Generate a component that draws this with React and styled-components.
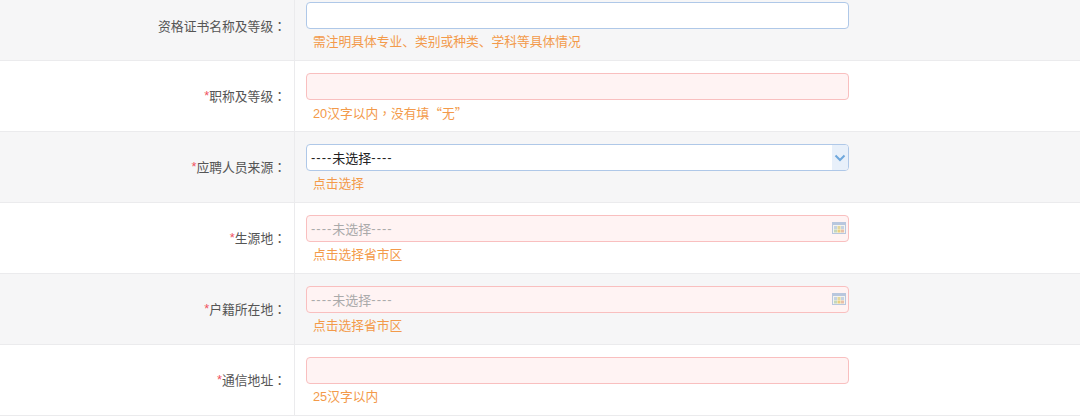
import React from 'react';
import styled, { createGlobalStyle } from 'styled-components';

const GlobalStyle = createGlobalStyle`
  html, body {
    margin: 0;
    padding: 0;
    background: #fff;
    overflow: hidden;
  }
  body {
    font-family: "Liberation Sans", "Noto Sans CJK SC", sans-serif;
  }
`;

const Form = styled.div`
  width: 1080px;
  height: 416px;
  overflow: hidden;
`;

const Row = styled.div`
  display: grid;
  grid-template-columns: 294px 1fr;
  height: ${(p) => (p.$first ? '60px' : '70px')};
  background: ${(p) => (p.$shaded ? '#f6f6f7' : '#fff')};
  border-bottom: 1px solid #ebebed;
`;

const Label = styled.div`
  display: flex;
  align-items: center;
  justify-content: flex-end;
  padding: ${(p) => (p.$first ? '0 8px 10px 0' : '0 8px 2px 0')};
  font-size: 12.8px;
  color: #555;
  white-space: nowrap;
`;

const Star = styled.span`
  color: #f0525f;
`;

// centred full-width punctuation, as the traditional CJK cut draws it
const Punct = styled.span`
  font-family: "Noto Sans CJK TC", sans-serif;
`;

const Control = styled.div`
  display: flex;
  flex-direction: column;
  align-items: flex-start;
  padding: ${(p) => (p.$first ? '2px 0 0 11px' : '12px 0 0 11px')};
  border-left: 1px solid #ebebed;
`;

const Field = styled.div`
  position: relative;
  box-sizing: border-box;
  display: flex;
  align-items: center;
  width: 543px;
  height: 27px;
  padding-left: 4px;
  border-radius: 4px;
  border: 1px solid ${(p) => (p.$error ? '#f9bfbf' : '#afc8e8')};
  background: ${(p) => (p.$error ? '#fff3f3' : '#fff')};
  color: ${(p) => (p.$error ? '#aaa' : '#222')};
  font-size: 13px;
`;

const Dashes = styled.span`
  letter-spacing: 1px;
`;

const SelectArrow = styled.div`
  position: absolute;
  top: 0;
  right: 0;
  bottom: 0;
  width: 16px;
  display: flex;
  align-items: center;
  justify-content: center;
  background: #e8f0fa;
  border-radius: 0 3px 3px 0;
`;

const CalendarIcon = styled.svg`
  position: absolute;
  top: 6px;
  right: 2px;
`;

const Hint = styled.div`
  margin: 5px 0 0 7px;
  font-size: 12.75px;
  line-height: 15px;
  color: #f39a4a;
  white-space: nowrap;
`;

const Chevron = () => (
  <svg width="12" height="8" viewBox="0 0 12 8">
    <path d="M1.5 1.5 L6 6 L10.5 1.5" fill="none" stroke="#6fa8dc" strokeWidth="2" />
  </svg>
);

const Calendar = () => (
  <CalendarIcon width="14" height="12" viewBox="0 0 14 12">
    <rect x="0" y="0" width="14" height="12" fill="#b9c7de" />
    <rect x="1" y="3" width="12" height="8" fill="#f5f4ee" />
    <rect x="2" y="4" width="3" height="3" fill="#c5d2e2" />
    <rect x="5.5" y="4" width="3" height="3" fill="#e4d79c" />
    <rect x="9" y="4" width="3" height="3" fill="#c5d2e2" />
    <rect x="2" y="7.5" width="3" height="3" fill="#c5d8bb" />
    <rect x="5.5" y="7.5" width="3" height="3" fill="#eccf7d" />
    <rect x="9" y="7.5" width="3" height="3" fill="#e8bfa8" />
  </CalendarIcon>
);

const Unselected = () => (
  <>
    <Dashes>----</Dashes>未选择<Dashes>----</Dashes>
  </>
);

const rows = [
  { label: '资格证书名称及等级', hint: '需注明具体专业、类别或种类、学科等具体情况' },
  {
    label: '职称及等级',
    required: true,
    error: true,
    hint: (
      <>
        20汉字以内<Punct>，</Punct>没有填<Punct>“</Punct>无<Punct>”</Punct>
      </>
    ),
  },
  { label: '应聘人员来源', required: true, kind: 'select', hint: '点击选择' },
  { label: '生源地', required: true, error: true, kind: 'date', hint: '点击选择省市区' },
  { label: '户籍所在地', required: true, error: true, kind: 'date', hint: '点击选择省市区' },
  { label: '通信地址', required: true, error: true, hint: '25汉字以内' },
];

export default function App() {
  return (
    <Form>
      <GlobalStyle />
      {rows.map((row, index) => (
        <Row key={index} $first={index === 0} $shaded={index % 2 === 0}>
          <Label $first={index === 0}>
            {row.required && <Star>*</Star>}
            {row.label}
            <Punct>：</Punct>
          </Label>
          <Control $first={index === 0}>
            <Field $error={row.error}>
              {row.kind && <Unselected />}
              {row.kind === 'select' && (
                <SelectArrow>
                  <Chevron />
                </SelectArrow>
              )}
              {row.kind === 'date' && <Calendar />}
            </Field>
            <Hint>{row.hint}</Hint>
          </Control>
        </Row>
      ))}
    </Form>
  );
}
